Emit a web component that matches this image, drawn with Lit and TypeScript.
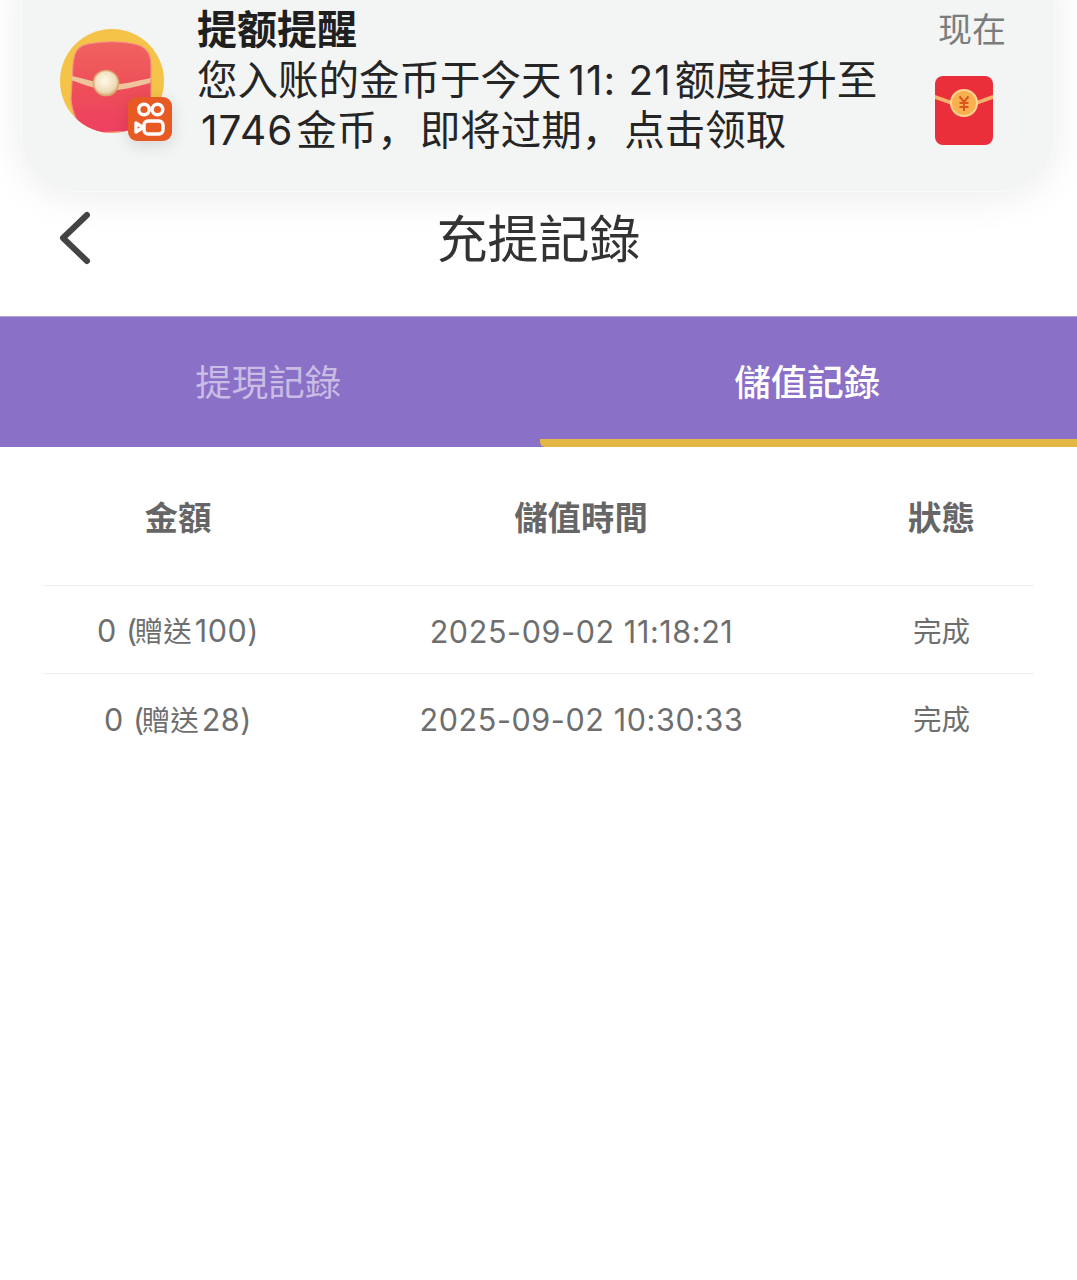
import { LitElement, html, css } from "lit";
import { customElement } from "lit/decorators.js";

const rows = [
  { pre: "0 (", gift: "贈送", num: "100)", time: "2025-09-02 11:18:21", status: "完成" },
  { pre: "0 (", gift: "贈送", num: "28)", time: "2025-09-02 10:30:33", status: "完成" },
];

@customElement("app-root")
export class AppRoot extends LitElement {
  static styles = css`
    :host {
      display: block;
      position: relative;
      width: 1077px;
      height: 1280px;
      overflow: hidden;
      background: #fff;
      font-family: Inter, "Noto Sans CJK TC", "Noto Sans CJK SC", sans-serif;
    }
    .notice {
      position: absolute;
      left: 21px;
      top: -60px;
      width: 1034px;
      height: 252px;
      box-sizing: border-box;
      border-radius: 56px;
      background: #f3f4f4;
      border: 1px solid #f9fafa;
      box-shadow: 0 4px 40px rgba(0, 0, 0, 0.08);
      display: flex;
      padding: 60px 48px 0 38px;
      font-family: Inter, "Noto Sans CJK SC", sans-serif;
    }
    .avatar {
      position: relative;
      width: 104px;
      height: 104px;
      margin-top: 28px;
      flex: none;
    }
    .avatar svg.main { display: block; }
    .badge {
      position: absolute;
      left: 68px;
      top: 68px;
      display: block;
      filter: drop-shadow(0 4px 8px rgba(0, 0, 0, 0.12));
    }
    .body {
      flex: none;
      width: 700px;
      margin-left: 33px;
      color: #252525;
      line-height: 50px;
    }
    .n-title { font-weight: 700; font-size: 40px; margin-top: 6px; height: 46px; line-height: 46px; color: #1f1f1f; }
    .n-text { font-size: 40.5px; white-space: nowrap; margin-top: 3px; line-height: 49.5px; }
    .n-text .l2 { display: block; padding-left: 4px; }
    .d { margin: 0 3px 0 7px; letter-spacing: 1px; }
    .d.first { margin-left: 0; }
    .comma { margin-right: 2px; }
    .side {
      flex: 1;
      display: flex;
      flex-direction: column;
      align-items: flex-end;
    }
    .now { font-size: 34px; line-height: 40px; margin-top: 9px; color: #7b7d7d; }
    .packet { display: block; margin-top: 26px; margin-right: 13px; }

    header {
      height: 151px;
      margin-top: 160px;
      padding-bottom: 5px;
      display: flex;
      align-items: center;
      justify-content: center;
      position: relative;
      font-size: 51px;
      color: #333;
    }
    .back { position: absolute; left: 56px; top: 50px; display: block; }

    .tabs {
      height: 131px;
      display: grid;
      grid-template-columns: 1fr 1fr;
      background: #8a70c6;
      border-top: 1px solid #b3a3d8;
      box-sizing: border-box;
    }
    .tab {
      display: flex;
      align-items: center;
      justify-content: center;
      font-size: 36.5px;
      color: #c9bce5;
      box-sizing: border-box;
      padding: 0 2px 4px 0;
    }
    .tab.on {
      color: #fff;
      font-weight: 500;
      border-bottom: 8px solid #e4b645;
      border-bottom-left-radius: 5px;
      margin-left: 1px;
      padding: 4px 2px 0 0;
    }

    .table { margin: 0 43px; }
    .row {
      display: grid;
      grid-template-columns: 270px 536px 185px;
      align-items: center;
      justify-items: center;
      height: 88px;
      border-bottom: 1px solid #eee;
      box-sizing: border-box;
      padding-top: 4px;
      font-size: 30.5px;
      line-height: 40px;
      color: #6e6e6e;
    }
    .row.last { border-bottom: none; }
    .row.head {
      height: 139px;
      padding-top: 4px;
      font-size: 33.4px;
      font-weight: 700;
      color: #666;
    }
    .time { letter-spacing: 0.6px; margin-left: 1px; }
    .amt { letter-spacing: 0.6px; white-space: pre; }
    .gift { font-size: 28.5px; letter-spacing: 0; margin: 0 3px 0 -3px; }
    .status { font-size: 28.5px; }
  `;

  render() {
    return html`
      <div class="notice">
        <div class="avatar">
          <svg class="main" width="104" height="104" viewBox="0 0 104 104">
            <defs>
              <linearGradient id="rp" x1="0" y1="0" x2="0" y2="1">
                <stop offset="0" stop-color="#ef6360" />
                <stop offset="0.5" stop-color="#ee4f58" />
                <stop offset="1" stop-color="#ee3f62" />
              </linearGradient>
              <radialGradient id="pearl" cx="0.45" cy="0.4" r="0.65">
                <stop offset="0" stop-color="#fff8e8" />
                <stop offset="0.7" stop-color="#eedcb8" />
                <stop offset="1" stop-color="#d7ac78" />
              </radialGradient>
              <clipPath id="disc"><rect width="104" height="104" rx="52" /></clipPath>
            </defs>
            <circle cx="52" cy="52" r="52" fill="#f4c348" />
            <g clip-path="url(#disc)">
              <path d="M28 15 C45 12 60 12 74 15 C86 17 91 24 91 36 L91 70 C91 82 86 94 76 102 L30 104 C18 98 12 84 11 70 L13 36 C14 24 17 17 28 15 Z" fill="url(#rp)" stroke="#f5908a" stroke-width="1.2" />
            </g>
            <path d="M12 47 C24 50 34 52 46 56 C62 56 76 52 91 49 L90 54 C76 58 62 61 46 62 C34 59 22 55 11 51 Z" fill="#eec49c" />
            <circle cx="46" cy="54" r="12.5" fill="url(#pearl)" stroke="#dca773" stroke-width="1.6" />
          </svg>
          <svg class="badge" width="44" height="44" viewBox="0 0 44 44">
            <rect width="44" height="44" rx="9" fill="#e75a24" />
            <g fill="none" stroke="#fff" stroke-width="3.4">
              <circle cx="16" cy="12.5" r="5.3" />
              <circle cx="29.5" cy="12.5" r="5.3" />
              <rect x="16" y="24" width="19" height="13" rx="4" />
              <path d="M15 30.5 L8 26 V35 Z" stroke-linejoin="round" />
            </g>
          </svg>
        </div>
        <div class="body">
          <div class="n-title">提额提醒</div>
          <div class="n-text">您入账的金币于今天<span class="d">11: 21</span>额度提升至<span class="l2"><span class="d first">1746</span>金币<span class="comma">，</span>即将过期<span class="comma">，</span>点击领取</span></div>
        </div>
        <div class="side">
          <div class="now">现在</div>
          <svg class="packet" width="58" height="69" viewBox="0 0 58 69">
            <rect width="58" height="69" rx="8" fill="#ea2f3b" />
            <path d="M0 19 C10 22 18 26 29 28 C40 26 48 22 58 19 V23 C48 26 40 30 29 32 C18 30 10 26 0 23 Z" fill="#f6b26a" />
            <circle cx="29" cy="27" r="13" fill="#fbb04f" stroke="#fcd592" stroke-width="2" />
            <path d="M24.5 20.5 L29 26 L33.5 20.5 M29 26 V35 M24.5 27 H33.5 M24.5 31 H33.5" fill="none" stroke="#d9541e" stroke-width="2" />
          </svg>
        </div>
      </div>

      <header>
        <svg class="back" width="38" height="56" viewBox="0 0 38 56">
          <path d="M31 5 L7 28 L31 51" fill="none" stroke="#444" stroke-width="6" stroke-linecap="round" stroke-linejoin="round" />
        </svg>
        充提記錄
      </header>

      <div class="tabs">
        <div class="tab">提現記錄</div>
        <div class="tab on">儲值記錄</div>
      </div>

      <div class="table">
        <div class="row head">
          <div>金額</div>
          <div>儲值時間</div>
          <div>狀態</div>
        </div>
        ${rows.map(
          (r, i) => html`
            <div class="row ${i === rows.length - 1 ? "last" : ""}">
              <div class="amt">${r.pre}<span class="gift">${r.gift}</span>${r.num}</div>
              <div class="time">${r.time}</div>
              <div class="status">${r.status}</div>
            </div>
          `
        )}
      </div>
    `;
  }
}
